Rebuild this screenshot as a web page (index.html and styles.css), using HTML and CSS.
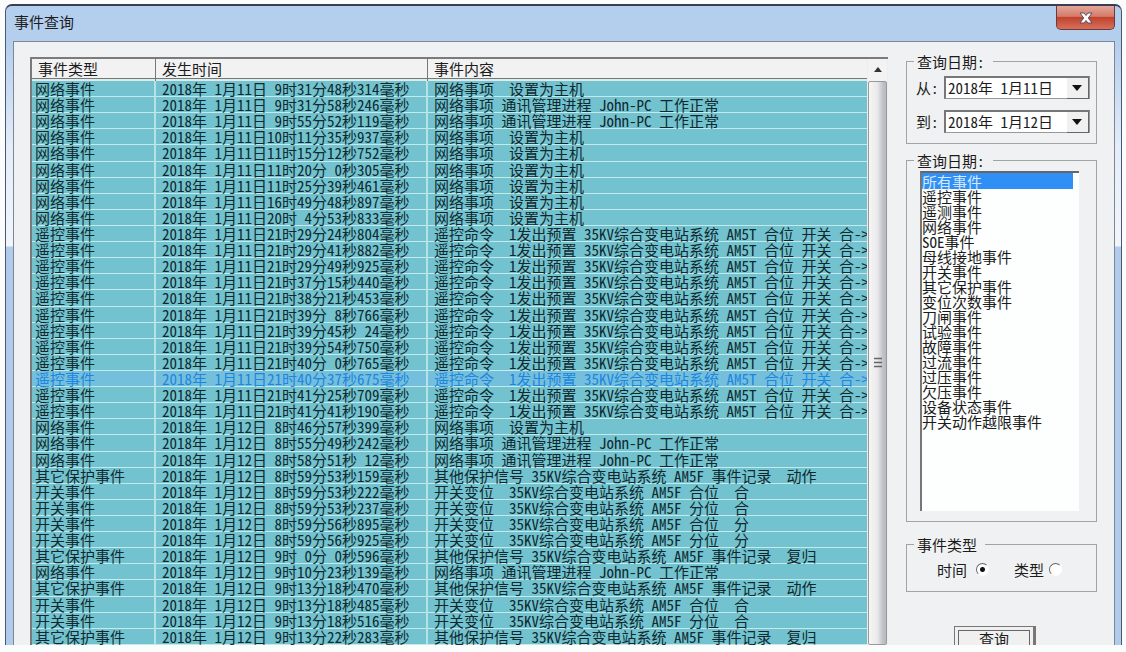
FILE: index.html
```html
<!DOCTYPE html>
<html lang="zh-CN">
<head>
    <meta charset="UTF-8">
    <meta name="viewport" content="width=device-width, initial-scale=1.0">
    <title>事件查询</title>
    <link rel="stylesheet" href="styles.css">
</head>
<body>
    <div class="window">
        <div class="titlebar">
            <h1>事件查询</h1>
            <button class="close" type="button" aria-label="关闭">
                <svg width="14" height="12" viewBox="0 0 14 12">
                    <path d="M1 1h4l2 2.500L9 1h4L9.300 6 13 11H9L7 8.500 5 11H1l3.700-5z" fill="#fff" stroke="#5b5060" stroke-width="1"/>
                </svg>
            </button>
        </div>

        <div class="content">
            <div class="event-list">
                <table>
                    <colgroup>
                        <col class="col-type">
                        <col class="col-time">
                        <col>
                    </colgroup>
                    <thead>
                        <tr><th>事件类型</th><th>发生时间</th><th>事件内容</th></tr>
                    </thead>
                    <tbody>
                        <tr><td>网络事件</td><td>2018年 1月11日 9时31分48秒314毫秒</td><td>网络事项  设置为主机</td></tr>
                        <tr><td>网络事件</td><td>2018年 1月11日 9时31分58秒246毫秒</td><td>网络事项 通讯管理进程 John-PC 工作正常</td></tr>
                        <tr><td>网络事件</td><td>2018年 1月11日 9时55分52秒119毫秒</td><td>网络事项 通讯管理进程 John-PC 工作正常</td></tr>
                        <tr><td>网络事件</td><td>2018年 1月11日10时11分35秒937毫秒</td><td>网络事项  设置为主机</td></tr>
                        <tr><td>网络事件</td><td>2018年 1月11日11时15分12秒752毫秒</td><td>网络事项  设置为主机</td></tr>
                        <tr><td>网络事件</td><td>2018年 1月11日11时20分 0秒305毫秒</td><td>网络事项  设置为主机</td></tr>
                        <tr><td>网络事件</td><td>2018年 1月11日11时25分39秒461毫秒</td><td>网络事项  设置为主机</td></tr>
                        <tr><td>网络事件</td><td>2018年 1月11日16时49分48秒897毫秒</td><td>网络事项  设置为主机</td></tr>
                        <tr><td>网络事件</td><td>2018年 1月11日20时 4分53秒833毫秒</td><td>网络事项  设置为主机</td></tr>
                        <tr><td>遥控事件</td><td>2018年 1月11日21时29分24秒804毫秒</td><td>遥控命令  1发出预置 35KV综合变电站系统 AM5T 合位 开关 合-&gt;</td></tr>
                        <tr><td>遥控事件</td><td>2018年 1月11日21时29分41秒882毫秒</td><td>遥控命令  1发出预置 35KV综合变电站系统 AM5T 合位 开关 合-&gt;</td></tr>
                        <tr><td>遥控事件</td><td>2018年 1月11日21时29分49秒925毫秒</td><td>遥控命令  1发出预置 35KV综合变电站系统 AM5T 合位 开关 合-&gt;</td></tr>
                        <tr><td>遥控事件</td><td>2018年 1月11日21时37分15秒440毫秒</td><td>遥控命令  1发出预置 35KV综合变电站系统 AM5T 合位 开关 合-&gt;</td></tr>
                        <tr><td>遥控事件</td><td>2018年 1月11日21时38分21秒453毫秒</td><td>遥控命令  1发出预置 35KV综合变电站系统 AM5T 合位 开关 合-&gt;</td></tr>
                        <tr><td>遥控事件</td><td>2018年 1月11日21时39分 8秒766毫秒</td><td>遥控命令  1发出预置 35KV综合变电站系统 AM5T 合位 开关 合-&gt;</td></tr>
                        <tr><td>遥控事件</td><td>2018年 1月11日21时39分45秒 24毫秒</td><td>遥控命令  1发出预置 35KV综合变电站系统 AM5T 合位 开关 合-&gt;</td></tr>
                        <tr><td>遥控事件</td><td>2018年 1月11日21时39分54秒750毫秒</td><td>遥控命令  1发出预置 35KV综合变电站系统 AM5T 合位 开关 合-&gt;</td></tr>
                        <tr><td>遥控事件</td><td>2018年 1月11日21时40分 0秒765毫秒</td><td>遥控命令  1发出预置 35KV综合变电站系统 AM5T 合位 开关 合-&gt;</td></tr>
                        <tr class="selected"><td><span>遥控事件</span></td><td><span>2018年 1月11日21时40分37秒675毫秒</span></td><td><span>遥控命令  1发出预置 35KV综合变电站系统 AM5T 合位 开关 合-&gt;</span></td></tr>
                        <tr><td>遥控事件</td><td>2018年 1月11日21时41分25秒709毫秒</td><td>遥控命令  1发出预置 35KV综合变电站系统 AM5T 合位 开关 合-&gt;</td></tr>
                        <tr><td>遥控事件</td><td>2018年 1月11日21时41分41秒190毫秒</td><td>遥控命令  1发出预置 35KV综合变电站系统 AM5T 合位 开关 合-&gt;</td></tr>
                        <tr><td>网络事件</td><td>2018年 1月12日 8时46分57秒399毫秒</td><td>网络事项  设置为主机</td></tr>
                        <tr><td>网络事件</td><td>2018年 1月12日 8时55分49秒242毫秒</td><td>网络事项 通讯管理进程 John-PC 工作正常</td></tr>
                        <tr><td>网络事件</td><td>2018年 1月12日 8时58分51秒 12毫秒</td><td>网络事项 通讯管理进程 John-PC 工作正常</td></tr>
                        <tr><td>其它保护事件</td><td>2018年 1月12日 8时59分53秒159毫秒</td><td>其他保护信号 35KV综合变电站系统 AM5F 事件记录  动作</td></tr>
                        <tr><td>开关事件</td><td>2018年 1月12日 8时59分53秒222毫秒</td><td>开关变位  35KV综合变电站系统 AM5F 合位  合</td></tr>
                        <tr><td>开关事件</td><td>2018年 1月12日 8时59分53秒237毫秒</td><td>开关变位  35KV综合变电站系统 AM5F 分位  合</td></tr>
                        <tr><td>开关事件</td><td>2018年 1月12日 8时59分56秒895毫秒</td><td>开关变位  35KV综合变电站系统 AM5F 合位  分</td></tr>
                        <tr><td>开关事件</td><td>2018年 1月12日 8时59分56秒925毫秒</td><td>开关变位  35KV综合变电站系统 AM5F 分位  分</td></tr>
                        <tr><td>其它保护事件</td><td>2018年 1月12日 9时 0分 0秒596毫秒</td><td>其他保护信号 35KV综合变电站系统 AM5F 事件记录  复归</td></tr>
                        <tr><td>网络事件</td><td>2018年 1月12日 9时10分23秒139毫秒</td><td>网络事项 通讯管理进程 John-PC 工作正常</td></tr>
                        <tr><td>其它保护事件</td><td>2018年 1月12日 9时13分18秒470毫秒</td><td>其他保护信号 35KV综合变电站系统 AM5F 事件记录  动作</td></tr>
                        <tr><td>开关事件</td><td>2018年 1月12日 9时13分18秒485毫秒</td><td>开关变位  35KV综合变电站系统 AM5F 合位  合</td></tr>
                        <tr><td>开关事件</td><td>2018年 1月12日 9时13分18秒516毫秒</td><td>开关变位  35KV综合变电站系统 AM5F 分位  合</td></tr>
                        <tr><td>其它保护事件</td><td>2018年 1月12日 9时13分22秒283毫秒</td><td>其他保护信号 35KV综合变电站系统 AM5F 事件记录  复归</td></tr>
                    </tbody>
                </table>
                <div class="scrollbar">
                    <button class="scroll-up" type="button" aria-label="向上滚动">
                        <svg width="8" height="5" viewBox="0 0 8 5"><path d="M0 5 4 0l4 5z" fill="#333"/></svg>
                    </button>
                    <div class="thumb">
                        <svg width="8" height="12" viewBox="0 0 8 12"><path d="M0 1.500h8M0 5.500h8M0 9.500h8" stroke="#666" stroke-width="1.500"/></svg>
                    </div>
                </div>
            </div>

            <form class="panel">
                <fieldset class="dates">
                    <legend>查询日期:</legend>
                    <div class="date-row">
                        <label for="from">从:</label>
                        <div class="picker">
                            <select id="from"><option>2018年 1月11日</option></select>
                        </div>
                    </div>
                    <div class="date-row">
                        <label for="to">到:</label>
                        <div class="picker">
                            <select id="to"><option>2018年 1月12日</option></select>
                        </div>
                    </div>
                </fieldset>

                <fieldset class="kinds">
                    <legend><label for="kind">查询日期:</label></legend>
                    <select id="kind" size="17">
                        <option selected>所有事件</option>
                        <option>遥控事件</option>
                        <option>遥测事件</option>
                        <option>网络事件</option>
                        <option>SOE事件</option>
                        <option>母线接地事件</option>
                        <option>开关事件</option>
                        <option>其它保护事件</option>
                        <option>变位次数事件</option>
                        <option>刀闸事件</option>
                        <option>试验事件</option>
                        <option>故障事件</option>
                        <option>过流事件</option>
                        <option>过压事件</option>
                        <option>欠压事件</option>
                        <option>设备状态事件</option>
                        <option>开关动作越限事件</option>
                    </select>
                </fieldset>

                <fieldset class="order">
                    <legend>事件类型</legend>
                    <div class="radios">
                        <label>时间<input type="radio" name="order" checked></label>
                        <label>类型<input type="radio" name="order"></label>
                    </div>
                </fieldset>

                <button class="query" type="submit"><span>查询</span></button>
            </form>
        </div>
    </div>
</body>
</html>
```
FILE: styles.css
```css
* {
    box-sizing: border-box;
}
body {
    margin: 0;
    height: 100vh;
    padding: 4px 4px 7px 5px;
    overflow: hidden;
    background-color: #fbfdfd;
    color: #1c1c1c;
}
body, button, select {
    font-family: "Noto Sans CJK SC", sans-serif;
    font-size: 15px;
    line-height: 15px;
    font-feature-settings: "hwid";
}
.window {
    display: flex;
    flex-direction: column;
    height: 100%;
    padding: 0 6px 0 7px;
    border: 1px solid #4a5578;
    border-top: 2px solid #3c3d55;
    border-bottom: 0;
    border-radius: 7px 7px 0 0;
    overflow: hidden;
    background: linear-gradient(#b3cfee 0, #b5cfee 40px, #e4edf8 140px, #f2f6fb 240px, #b1cbea 241px);
}
.titlebar {
    display: flex;
    flex: none;
    justify-content: space-between;
    align-items: flex-start;
    height: 35px;
}
.titlebar h1 {
    margin: 7px 0 0 1px;
    font-size: 15px;
    line-height: 17px;
    font-weight: 400;
}
.close {
    display: flex;
    justify-content: center;
    align-items: center;
    width: 59px;
    height: 24px;
    padding: 0;
    border: 1px solid #6b3a40;
    border-top: 0;
    border-radius: 0 0 5px 5px;
    background: linear-gradient(#e0a79b, #d67a68 45%, #c0432e 50%, #d8705a);
}
.content {
    display: flex;
    flex: 1;
    min-height: 0;
    gap: 18px;
    padding: 12px 17px 0 16px;
    border: 1px solid #7c8696;
    border-bottom: 0;
    overflow: hidden;
    background-color: #f0f1f2;
}

/* event list */
.event-list {
    display: flex;
    flex: 1;
    min-width: 0;
    margin-top: 3px;
    border-top: 2px solid #7b7b7b;
    border-left: 2px solid #7b7b7b;
}
table {
    flex: 1;
    width: 100%;
    height: 100%;
    table-layout: fixed;
    border-collapse: separate;
    border-spacing: 0;
    white-space: pre;
}
.col-type {
    width: 124px;
}
.col-time {
    width: 272px;
}
th {
    height: 22px;
    padding: 0 0 4px 6px;
    background: linear-gradient(#f2f2f2 19px, #777 19px, #777 20px, #dcebec 20px);
    border-right: 1px solid #777;
    font-weight: 400;
    text-align: left;
}
th:last-child {
    border-right: 0;
}
td {
    padding: 0 0 0 6px;
    border-bottom: 1px solid #c4eaec;
    border-right: 2px solid #b5e2e6;
    background-color: #72c3cf;
    color: #10292e;
    line-height: 15px;
}
td:first-child {
    padding-left: 3px;
}
td:last-child {
    border-right: 0;
}
.selected span {
    color: #1e85e0;
}
.selected td {
    background-color: #74c0dc;
}
.scrollbar {
    display: flex;
    flex: none;
    flex-direction: column;
    width: 21px;
    padding: 0 1px;
    background-color: #eceeee;
}
.scroll-up {
    height: 22px;
    padding: 0;
    border: 0;
    background-color: #f3f3f3;
}
.scroll-up svg {
    display: block;
    margin: 0 auto 2px;
}
.thumb {
    display: flex;
    flex: 1;
    justify-content: center;
    align-items: center;
    border: 1px solid #999;
    border-radius: 2px;
    background: linear-gradient(90deg, #f6f6f6, #e9e9eb 50%, #c3c4ca 80%, #b8b9c0);
}

/* query panel */
.panel {
    display: flex;
    flex: none;
    flex-direction: column;
    width: 191px;
}
fieldset {
    flex: none;
    min-width: 0;
    margin: 0;
    padding: 0;
    border: 1px solid #a3a3a3;
}
legend {
    margin-left: 7px;
    padding: 0 8px 0 3px;
}
.dates {
    height: 90px;
    margin-bottom: 9px;
}
.date-row {
    display: flex;
    align-items: center;
    gap: 4px;
    height: 24px;
    margin: 6px 6px 10px 9px;
}
.date-row label {
    width: 24px;
}
.picker {
    position: relative;
    flex: 1;
    height: 23px;
    border: 1px solid #999;
    border-top: 2px solid #777;
    border-left: 2px solid #777;
    background-color: #fff;
}
.picker select {
    display: block;
    width: 100%;
    height: 100%;
    padding: 0 22px 0 2px;
    border: 0;
    appearance: none;
    background: none;
    color: #1c1c1c;
    white-space: pre;
}
/* drop-down button with its triangle */
.picker::after {
    content: "";
    position: absolute;
    top: 0;
    right: 0;
    width: 21px;
    height: 20px;
    border-right: 1px solid #666;
    border-bottom: 1px solid #666;
    background-color: #f0f0f0;
    pointer-events: none;
}
.picker::before {
    content: "";
    position: absolute;
    z-index: 1;
    top: 7px;
    right: 7px;
    border: 5px solid transparent;
    border-top: 6px solid #111;
    border-bottom: 0;
    pointer-events: none;
}
.kinds {
    height: 369px;
    margin-bottom: 15px;
}
#kind {
    display: block;
    width: calc(100% - 30px);
    height: 340px;
    margin: 3px 17px 0 13px;
    padding: 0 6px 0 0;
    border: 0;
    border-top: 2px solid #666;
    border-left: 2px solid #777;
    border-radius: 0;
    outline: 0;
    overflow: hidden;
    background-color: #fdfefe;
    color: #1c1c1c;
}
#kind option {
    display: flex;
    align-items: center;
    min-height: 0;
    height: 15px;
    padding: 0;
    line-height: 15px;
}
#kind option:checked {
    height: 16px;
    background: linear-gradient(#2f8ff5, #2f8ff5);
    color: #d5e8ff;
}
.order {
    height: 55px;
    margin-bottom: 34px;
}
.radios {
    display: flex;
    gap: 25px;
    padding: 10px 0 0 30px;
}
.radios label {
    display: flex;
    align-items: center;
    gap: 9px;
}
.radios label + label {
    gap: 5px;
}
.radios input {
    width: 13px;
    height: 13px;
    margin: 0;
    border: 1px solid;
    border-color: #666 #fff #fff #666;
    border-radius: 50%;
    appearance: none;
    background-color: #fff;
}
.radios input:checked {
    background: radial-gradient(#111 2px, #fff 3px);
}
.query {
    flex: none;
    align-self: flex-start;
    width: 82px;
    height: 30px;
    margin-left: 48px;
    padding: 3px;
    border: 1px solid #777;
    border-right: 3px solid #777;
    background-color: #f0f0f0;
    color: #1c1c1c;
}
.query span {
    display: block;
    height: 22px;
    border: 1px solid #666;
}
```
